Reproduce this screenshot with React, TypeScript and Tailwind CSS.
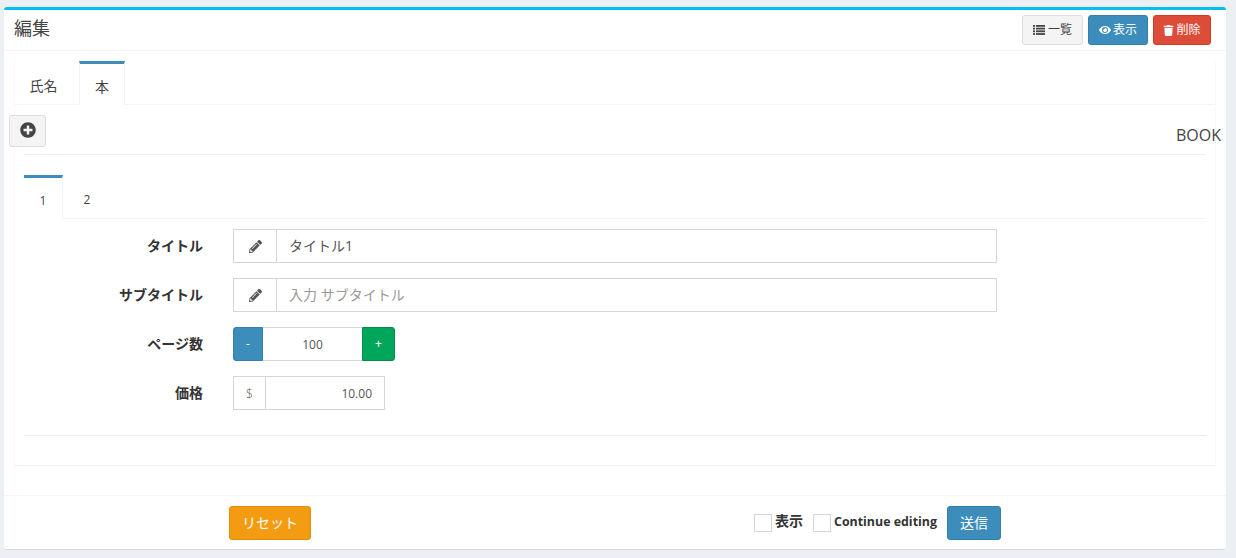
import React from 'react';
import { FaEye, FaPencilAlt, FaPlusCircle, FaTrash } from 'react-icons/fa';

const FONT = "font-['Open_Sans','Noto_Sans_CJK_JP',sans-serif]";

// fa-list: solid bullets with thick bars
const ListIcon = () => (
  <svg viewBox="0 0 12 10" className="h-[10px] w-[12px]" fill="currentColor">
    <rect x="0" y="0" width="2" height="1.8" />
    <rect x="3" y="0" width="9" height="1.8" />
    <rect x="0" y="2.7" width="2" height="1.8" />
    <rect x="3" y="2.7" width="9" height="1.8" />
    <rect x="0" y="5.4" width="2" height="1.8" />
    <rect x="3" y="5.4" width="9" height="1.8" />
    <rect x="0" y="8.1" width="2" height="1.8" />
    <rect x="3" y="8.1" width="9" height="1.8" />
  </svg>
);

const App: React.FC = () => {
  return (
    <div className={`${FONT} h-[558px] overflow-hidden bg-[#ecf0f5] pl-[4px] pr-[10px] pt-[7px] text-[14px] text-[#333]`}>
      <div className="h-[543px] rounded-[3px] border-t-[3px] border-b border-[#00c0ef] border-b-[#d2d6de] bg-white">
        {/* header */}
        <div className="flex h-[41px] items-start justify-between border-b border-[#f4f4f4] pl-[10px] pr-[15px]">
          <h3 className="mt-[5px] text-[18px] leading-[26px] text-[#444]">編集</h3>
          <div className="mt-[5px] flex gap-[5px]">
            <button className="flex h-[30px] w-[61px] items-center justify-center gap-[3px] rounded-[3px] border border-[#ddd] bg-[#f4f4f4] text-[12px] text-[#444]">
              <ListIcon />一覧
            </button>
            <button className="flex h-[30px] w-[60px] items-center justify-center gap-[2px] rounded-[3px] border border-[#367fa9] bg-[#3c8dbc] text-[12px] text-white">
              <FaEye className="h-[12px] w-[12px]" />表示
            </button>
            <button className="flex h-[30px] w-[58px] items-center justify-center gap-[2px] rounded-[3px] border border-[#d73925] bg-[#dd4b39] text-[12px] text-white">
              <FaTrash className="h-[11px] w-[11px]" />削除
            </button>
          </div>
        </div>

        {/* outer tabs */}
        <div className="mx-[10px] mt-[10px] h-[405px] border-x border-b border-x-[#fafafa] border-b-[#eee]">
          <div className="flex h-[44px] items-end border-b border-[#f4f4f4]">
            <div className="flex h-[43px] w-[64px] items-center justify-center pr-[7px] pt-[5px] text-[#444]">氏名</div>
            <div className="-mb-px flex h-[44px] w-[46px] items-center justify-center border-x border-t-[3px] border-x-[#f4f4f4] border-t-[#3c8dbc] bg-white pt-[3px] text-[#444]">本</div>
          </div>

          <div className="relative mx-[9px] flex h-[50px] border-b border-[#f0f0f0]">
            <button className="absolute left-[-15px] top-[10px] flex h-[32px] w-[37px] items-center justify-center rounded-[3px] border border-[#ddd] bg-[#f4f4f4] pb-[2px] text-[#444]">
              <FaPlusCircle className="h-[16px] w-[16px]" />
            </button>
            <span className="absolute right-[-15px] top-[19px] text-[16px] leading-[22px] text-[#444]">BOOK</span>
          </div>

          {/* inner tabs */}
          <div className="mx-[9px] mt-[20px]">
            <div className="flex h-[44px] items-end border-b border-[#f4f4f4]">
              <div className="-mb-px flex h-[44px] w-[39px] items-center justify-center border-r border-t-[3px] border-r-[#f4f4f4] border-t-[#3c8dbc] bg-white pt-[4px] text-[12px] text-[#444]">1</div>
              <div className="flex h-[43px] w-[48px] items-center justify-center pt-[7px] text-[12px] text-[#444]">2</div>
            </div>

            <div className="flex h-[217px] flex-col gap-[15px] border-b border-[#eee] pr-px pt-[10px]">
              <div className="flex h-[34px] items-center">
                <label className="-mt-[2px] w-[179px] text-right font-bold text-[#333]">タイトル</label>
                <div className="ml-[30px] flex h-[34px] w-[764px] border border-[#d2d6de]">
                  <span className="flex w-[43px] items-center justify-center border-r border-[#d2d6de] text-[#555]">
                    <FaPencilAlt className="h-[13px] w-[13px]" />
                  </span>
                  <input readOnly value="タイトル1" className="min-w-0 flex-1 px-[12px] pb-[2px] text-[14px] text-[#555] outline-none" />
                </div>
              </div>
              <div className="flex h-[34px] items-center">
                <label className="-mt-[2px] w-[179px] text-right font-bold text-[#333]">サブタイトル</label>
                <div className="ml-[30px] flex h-[34px] w-[764px] border border-[#d2d6de]">
                  <span className="flex w-[43px] items-center justify-center border-r border-[#d2d6de] text-[#555]">
                    <FaPencilAlt className="h-[13px] w-[13px]" />
                  </span>
                  <input readOnly placeholder="入力 サブタイトル" className="min-w-0 flex-1 px-[12px] pb-[2px] text-[14px] text-[#555] outline-none placeholder:text-[#999]" />
                </div>
              </div>
              <div className="flex h-[34px] items-center">
                <label className="-mt-[2px] w-[179px] text-right font-bold text-[#333]">ページ数</label>
                <div className="ml-[30px] flex h-[34px]">
                  <button className="w-[30px] rounded-l-[3px] border border-[#367fa9] bg-[#3c8dbc] text-[12px] text-white">-</button>
                  <input readOnly value="100" className="w-[99px] border-y border-[#d2d6de] pt-[2px] text-center text-[12px] text-[#555] outline-none" />
                  <button className="w-[33px] rounded-r-[3px] border border-[#008d4c] bg-[#00a65a] text-[12px] text-white">+</button>
                </div>
              </div>
              <div className="flex h-[34px] items-center">
                <label className="-mt-[2px] w-[179px] text-right font-bold text-[#333]">価格</label>
                <div className="ml-[30px] flex h-[34px] w-[152px] border border-[#d2d6de]">
                  <span className="flex w-[32px] items-center justify-center border-r border-[#d2d6de] pt-[2px] text-[12px] font-light text-[#555]">$</span>
                  <input readOnly value="10.00" className="min-w-0 flex-1 px-[12px] pt-[2px] text-right text-[12px] text-[#555] outline-none" />
                </div>
              </div>
            </div>
          </div>
        </div>

        {/* footer */}
        <div className="mt-[29px] flex h-[54px] items-start border-t border-[#f4f4f4] pt-[10px]">
          <button className="ml-[225px] h-[34px] w-[82px] rounded-[3px] border border-[#e08e0b] bg-[#f39c12] pb-[2px] text-[14px] text-white">リセット</button>
          <div className="ml-[443px] mt-[8px] flex items-start">
            <span className="h-[18px] w-[18px] border border-[#d2d6de] bg-white" />
            <span className="ml-[3px] -mt-px w-[28px] whitespace-nowrap text-[14px] font-bold leading-[15px] text-[#333]">表示</span>
            <span className="ml-[10px] h-[18px] w-[18px] border border-[#d2d6de] bg-white" />
            <span className="ml-[3px] whitespace-nowrap text-[12.4px] font-bold leading-[15px] text-[#333]">Continue editing</span>
          </div>
          <button className="ml-[10px] h-[34px] w-[54px] rounded-[3px] border border-[#367fa9] bg-[#3c8dbc] pb-[2px] text-[14px] text-white">送信</button>
        </div>
      </div>
    </div>
  );
};

export default App;
